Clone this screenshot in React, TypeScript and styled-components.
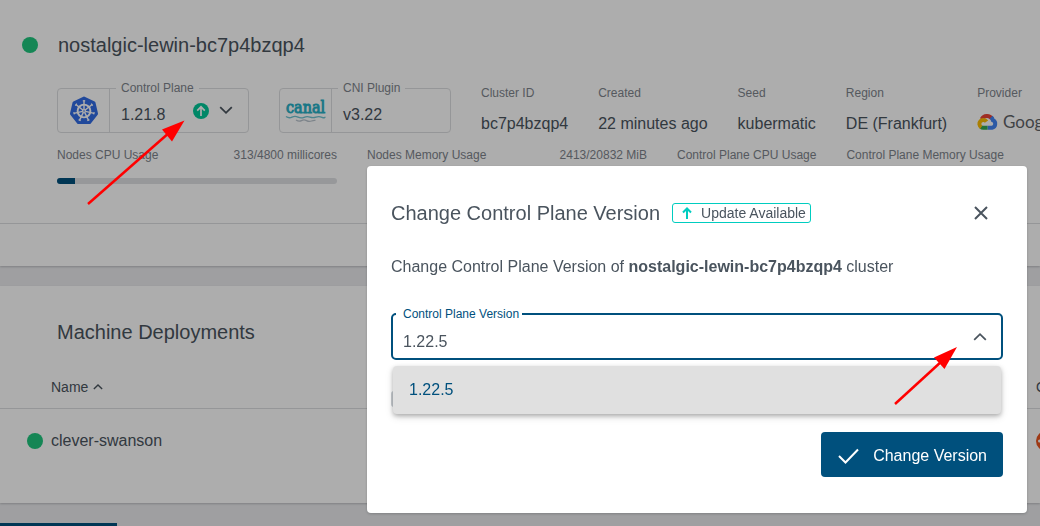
import React from "react";
import styled, { createGlobalStyle } from "styled-components";

const GlobalStyle = createGlobalStyle`
  *, *::before, *::after { box-sizing: border-box; }
  body {
    margin: 0;
    background: #eaebee;
    color: #4a545e;
    font-family: "Liberation Sans", Arial, sans-serif;
    font-size: 16px;
    line-height: 20px;
    overflow: hidden;
  }
  h1, h2, p, ul, dl, dd { margin: 0; padding: 0; }
  button, select, input { font: inherit; color: inherit; }
  svg { display: block; flex: none; }
`;

const Card = styled.section`
  background: #fff;
  margin-bottom: 20px;
  overflow: hidden;
  box-shadow: 0 1px 2px rgba(0, 0, 0, 0.2);
`;

const ClusterHeader = styled.header`
  display: flex;
  align-items: center;
  gap: 20px;
  padding: 24px 22px 0;
  height: 65px;
`;

const Dot = styled.span`
  flex: none;
  width: 16px;
  height: 16px;
  border-radius: 50%;
  background: #1fc67e;
`;

const Title = styled.h1`
  font-size: 20px;
  font-weight: 400;
  line-height: 24px;
  white-space: nowrap;
`;

const Details = styled.div`
  display: flex;
  align-items: flex-end;
  gap: 30px;
  padding: 20px 0 0 57px;
  white-space: nowrap;
`;

const OutlinedBox = styled.div<{ $width: number }>`
  position: relative;
  flex: none;
  display: flex;
  width: ${(p) => p.$width}px;
  height: 45px;
  border: 1px solid #dcdee0;
  border-radius: 4px;
`;

const LogoCell = styled.div`
  display: flex;
  align-items: center;
  justify-content: center;
  width: 52px;
  border-right: 1px solid #dcdee0;
`;

const BoxLabel = styled.span`
  position: absolute;
  top: -9px;
  left: 58px;
  padding: 0 5px;
  background: #fff;
  color: #7e848c;
  font-size: 12px;
  line-height: 16px;
`;

const BoxValue = styled.div`
  display: flex;
  align-items: center;
  padding: 8px 11px 0;
`;

const VersionButton = styled.button`
  flex: 1;
  display: flex;
  align-items: center;
  gap: 10px;
  padding: 0 15px 0 11px;
  border: 0;
  background: none;
`;

const VersionText = styled.span`
  flex: 1;
  padding-top: 8px;
  text-align: left;
`;

const Property = styled.dl`
  display: flex;
  flex-direction: column;
  gap: 12px;
`;

const PropertyName = styled.dt`
  color: #7e848c;
  font-size: 12px;
  line-height: 16px;
`;

const PropertyValue = styled.dd`
  height: 20px;
  line-height: 22px;
`;

const UsageRow = styled.div`
  display: flex;
  gap: 30px;
  padding: 14px 0 39px 57px;
`;

const Usage = styled.div<{ $wide?: boolean }>`
  flex: none;
  min-width: ${(p) => (p.$wide ? "280px" : "0")};
`;

const UsageText = styled.div`
  display: flex;
  justify-content: space-between;
  margin-bottom: 15px;
  color: #7e848c;
  font-size: 12px;
  line-height: 16px;
  white-space: nowrap;
`;

const Track = styled.div`
  height: 6px;
  border-radius: 3px;
  background: #dfe1e4;
  overflow: hidden;
`;

const Fill = styled.div`
  height: 100%;
  background: #00507d;
`;

const CardFooter = styled.div`
  height: 43px;
  border-top: 1px solid #dcdee0;
`;

const SectionTitle = styled.h2`
  padding: 34px 57px 22px;
  font-size: 20px;
  font-weight: 400;
  line-height: 24px;
`;

const Table = styled.table`
  width: calc(100% + 60px);
  margin-bottom: 29px;
  table-layout: fixed;
  border-collapse: collapse;
  text-align: left;
`;

const HeadCell = styled.th<{ $last?: boolean }>`
  width: ${(p) => (p.$last ? "64px" : "auto")};
  height: 42px;
  padding: 0 0 0 ${(p) => (p.$last ? 0 : 51)}px;
  border-bottom: 1px solid #dcdee0;
  font-size: 14px;
  font-weight: 400;
`;

const SortLabel = styled.span`
  display: flex;
  align-items: center;
  gap: 5px;
`;

const Cell = styled.td<{ $last?: boolean }>`
  height: 66px;
  padding: 0 0 0 ${(p) => (p.$last ? 0 : 27)}px;
`;

const NameLine = styled.span`
  display: flex;
  align-items: center;
  gap: 8px;
`;

const TabIndicator = styled.div`
  width: 117px;
  height: 3px;
  background: #00507d;
`;

const Backdrop = styled.div`
  position: fixed;
  inset: 0;
  display: flex;
  align-items: flex-start;
  padding: 166px 13px 0 367px;
  background: rgba(0, 0, 0, 0.32);
`;

const Dialog = styled.div`
  flex: 1;
  padding: 24px 24px 36px;
  border-radius: 4px;
  background: #fff;
  box-shadow: 0 1px 3px rgba(0, 0, 0, 0.2);
`;

const DialogHeader = styled.div`
  display: flex;
  align-items: center;
  gap: 12px;
  height: 46px;
`;

const UpdateBadge = styled.span`
  display: flex;
  align-items: center;
  gap: 9px;
  height: 20px;
  padding: 0 4px 0 9px;
  border: 1px solid #00cdc0;
  border-radius: 3px;
  font-size: 14px;
  white-space: nowrap;
`;

const CloseButton = styled.button`
  display: flex;
  align-items: center;
  justify-content: center;
  width: 44px;
  height: 44px;
  margin-left: auto;
  padding: 0;
  border: 0;
  background: none;
`;

const Message = styled.p`
  margin: 19px 0 34px;
  line-height: 24px;
`;

const Field = styled.div`
  position: relative;
  height: 47px;
  border: 2px solid #00507d;
  border-radius: 5px;
`;

const FieldLabel = styled.label`
  position: absolute;
  top: -9px;
  left: 3px;
  padding: 0 3px 0 7px;
  background: #fff;
  color: #00507d;
  font-size: 12px;
  line-height: 16px;
`;

const Select = styled.select`
  width: 100%;
  height: 100%;
  padding: 10px 10px 0;
  border: 0;
  outline: 0;
  background: none;
  appearance: none;
`;

const FieldChevron = styled.span`
  position: absolute;
  top: 15px;
  right: 14px;
  pointer-events: none;
`;

const OptionPanel = styled.ul`
  position: absolute;
  top: 51px;
  left: 0;
  right: 0;
  border-radius: 4px;
  background: #e0e0e0;
  box-shadow: 0 2px 4px rgba(0, 0, 0, 0.25), 0 3px 8px rgba(0, 0, 0, 0.12);
  list-style: none;
`;

const Option = styled.li`
  padding: 0 16px;
  color: #00507d;
  line-height: 48px;
`;

const Checkbox = styled.input`
  display: block;
  width: 16px;
  height: 16px;
  margin: 31px 0 25px;
  border: 2px solid #c9ced3;
  border-radius: 3px;
  appearance: none;
`;

const Actions = styled.div`
  display: flex;
  justify-content: flex-end;
`;

const PrimaryButton = styled.button`
  display: flex;
  align-items: center;
  gap: 14px;
  height: 45px;
  padding: 2px 16px 0 17px;
  border: 0;
  border-radius: 4px;
  background: #00507d;
  color: #fff;
`;

const Annotations = styled.svg`
  position: fixed;
  top: 0;
  left: 0;
  pointer-events: none;
`;

const Chevron = ({ up, size = 14 }: { up?: boolean; size?: number }) => (
  <svg width={size} height={size} viewBox="0 0 14 14" fill="none" stroke="#4a545e" strokeWidth={size < 14 ? 2 : 1.8}>
    <path d={up ? "M1.2 9.8 7 4.2l5.8 5.6" : "M1.2 3.2 7 8.8l5.8-5.6"} />
  </svg>
);

const spokes = [0, 1, 2, 3, 4, 5, 6].map((i) => (i * 360) / 7);

const KubernetesLogo = () => (
  <svg width="30" height="30" viewBox="0 0 30 30">
    <path
      d="M15 2 25 6.8 27.5 17.7 20.6 26.5H9.4L2.5 17.7 5 6.8Z"
      fill="#326ce5"
      stroke="#326ce5"
      strokeWidth="3"
      strokeLinejoin="round"
    />
    <circle cx="15" cy="15" r="6.4" fill="none" stroke="#fff" strokeWidth="1.9" />
    {spokes.map((a) => (
      <g key={a} transform={`rotate(${a} 15 15)`}>
        <path d="M15 13.5V4.6" stroke="#fff" strokeWidth="1.4" />
        <path d="M13.8 4.8h2.4" stroke="#fff" strokeWidth="1.2" />
      </g>
    ))}
    <circle cx="15" cy="15" r="2.1" fill="#fff" />
    <circle cx="15" cy="15" r="0.8" fill="#326ce5" />
  </svg>
);

const CanalLogo = () => (
  <svg width="42" height="30" viewBox="0 0 42 30">
    <text
      x="1"
      y="17"
      fill="#27b0c6"
      stroke="#27b0c6"
      strokeWidth="0.9"
      fontFamily='"DejaVu Serif Condensed", "DejaVu Serif", serif'
      fontSize="16"
    >
      canal
    </text>
    <path
      d="M1 20.5q3 2 6 .6t6 0 6 .2 6-.2 6 0 6 .2 3-.6"
      fill="none"
      stroke="#70c3d0"
      strokeWidth="1.4"
    />
    <path d="M11 24q3 2 5.500.6t5 0 5 .4 4-.6" fill="none" stroke="#b9c3cc" strokeWidth="1.3" />
  </svg>
);

const GoogleCloudLogo = () => (
  <svg width="128" height="20" viewBox="0 0 128 20">
    <g fill="none" strokeWidth="4">
      <path d="M4.700 6.200A6 6 0 0 1 15 5.600" stroke="#ea4335" />
      <path d="M14.200 4.200C15.400 5.400 15.600 6.200 15.800 7.200A4 4 0 0 1 15 14.800H10.500" stroke="#4285f4" />
      <path d="M10.500 14.800H6.200Q4.800 14.800 3.800 14" stroke="#34a853" />
      <path d="M4.200 14.200A3.900 3.900 0 1 1 9.500 8.700" stroke="#fbbc05" />
    </g>
    <text x="26" y="15" fill="#5f6368" fontFamily="Lato, sans-serif" fontSize="17">
      Google Cloud
    </text>
  </svg>
);

const UbuntuLogo = () => (
  <svg width="20" height="20" viewBox="0 0 20 20">
    <circle cx="10" cy="10" r="10" fill="#e95420" />
    <circle cx="10" cy="10" r="4.200" fill="none" stroke="#fff" strokeWidth="1.800" />
    <circle cx="3.600" cy="10" r="1.600" fill="#fff" />
    <circle cx="13.200" cy="4.500" r="1.600" fill="#fff" />
    <circle cx="13.200" cy="15.500" r="1.600" fill="#fff" />
  </svg>
);

const properties = [
  { name: "Cluster ID", value: "bc7p4bzqp4" },
  { name: "Created", value: "22 minutes ago" },
  { name: "Seed", value: "kubermatic" },
  { name: "Region", value: "DE (Frankfurt)" },
  { name: "Provider", value: <GoogleCloudLogo /> },
];

const usages = [
  { name: "Nodes CPU Usage", value: "313/4800 millicores", percent: 6.5 },
  { name: "Nodes Memory Usage", value: "2413/20832 MiB", percent: 12 },
  { name: "Control Plane CPU Usage" },
  { name: "Control Plane Memory Usage" },
];

export default function App() {
  return (
    <>
      <GlobalStyle />
      <main>
        <Card>
          <ClusterHeader>
            <Dot />
            <Title>nostalgic-lewin-bc7p4bzqp4</Title>
          </ClusterHeader>
          <Details>
            <OutlinedBox $width={192}>
              <LogoCell>
                <KubernetesLogo />
              </LogoCell>
              <BoxLabel id="cp-label">Control Plane</BoxLabel>
              <VersionButton aria-labelledby="cp-label">
                <VersionText>1.21.8</VersionText>
                <svg width="16" height="16" viewBox="0 0 16 16">
                  <circle cx="8" cy="8" r="8" fill="#00c798" />
                  <path d="M8 13V4M4.200 7.600 8 3.800l3.800 3.800" fill="none" stroke="#fff" strokeWidth="1.700" />
                </svg>
                <Chevron />
              </VersionButton>
            </OutlinedBox>
            <OutlinedBox $width={172}>
              <LogoCell>
                <CanalLogo />
              </LogoCell>
              <BoxLabel>CNI Plugin</BoxLabel>
              <BoxValue>v3.22</BoxValue>
            </OutlinedBox>
            {properties.map((p) => (
              <Property key={p.name}>
                <PropertyName>{p.name}</PropertyName>
                <PropertyValue>{p.value}</PropertyValue>
              </Property>
            ))}
          </Details>
          <UsageRow>
            {usages.map((u) => (
              <Usage key={u.name} $wide={u.value !== undefined}>
                <UsageText>
                  <span>{u.name}</span>
                  {u.value && <span>{u.value}</span>}
                </UsageText>
                {u.percent && (
                  <Track>
                    <Fill style={{ width: `${u.percent}%` }} />
                  </Track>
                )}
              </Usage>
            ))}
          </UsageRow>
          <CardFooter />
        </Card>

        <Card>
          <SectionTitle>Machine Deployments</SectionTitle>
          <Table>
            <thead>
              <tr>
                <HeadCell>
                  <SortLabel>
                    Name <Chevron up size={10} />
                  </SortLabel>
                </HeadCell>
                <HeadCell $last>OS</HeadCell>
              </tr>
            </thead>
            <tbody>
              <tr>
                <Cell>
                  <NameLine>
                    <Dot />
                    clever-swanson
                  </NameLine>
                </Cell>
                <Cell $last>
                  <UbuntuLogo />
                </Cell>
              </tr>
            </tbody>
          </Table>
        </Card>
        <TabIndicator />
      </main>

      <Backdrop>
        <Dialog role="dialog" aria-modal="true" aria-labelledby="dialog-title">
          <DialogHeader>
            <Title as="h2" id="dialog-title">
              Change Control Plane Version
            </Title>
            <UpdateBadge>
              <svg width="10" height="12" viewBox="0 0 10 12" fill="none" stroke="#00cdc0" strokeWidth="2">
                <path d="M5 12V1.500M1 5.500l4-4 4 4" />
              </svg>
              Update Available
            </UpdateBadge>
            <CloseButton aria-label="Close">
              <svg width="14" height="14" viewBox="0 0 14 14" stroke="#4a545e" strokeWidth="2">
                <path d="m1 1 12 12M13 1 1 13" />
              </svg>
            </CloseButton>
          </DialogHeader>
          <Message>
            Change Control Plane Version of <strong>nostalgic-lewin-bc7p4bzqp4</strong> cluster
          </Message>
          <Field>
            <FieldLabel htmlFor="version">Control Plane Version</FieldLabel>
            <Select id="version" defaultValue="1.22.5">
              <option>1.22.5</option>
            </Select>
            <FieldChevron>
              <Chevron up />
            </FieldChevron>
            <OptionPanel role="listbox" aria-label="Control Plane Version">
              <Option role="option" aria-selected="true">
                1.22.5
              </Option>
            </OptionPanel>
          </Field>
          <Checkbox type="checkbox" aria-label="Upgrade Machine Deployments" />
          <Actions>
            <PrimaryButton>
              <svg width="21" height="16" viewBox="0 0 21 16" fill="none" stroke="#fff" strokeWidth="2">
                <path d="M1 8l6.500 6.500L20 1.500" />
              </svg>
              Change Version
            </PrimaryButton>
          </Actions>
        </Dialog>
      </Backdrop>

      <Annotations width="1040" height="526" viewBox="0 0 1040 526" aria-hidden="true">
        <g stroke="#f00" strokeWidth="2.500">
          <path d="M88 204 170 132" />
          <path d="M895 404 942 361" />
        </g>
        <g fill="#f00">
          <path d="M184.500 120.500 172 141.500 162 129.500Z" />
          <path d="M957 347 944.500 369 934 357.500Z" />
        </g>
      </Annotations>
    </>
  );
}
